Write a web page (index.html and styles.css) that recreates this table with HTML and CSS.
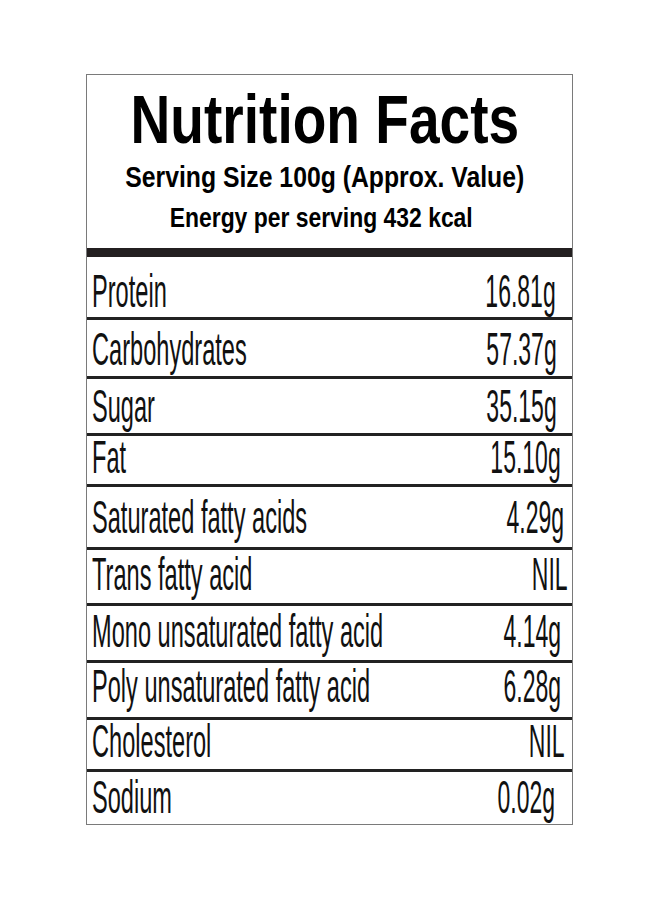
FILE: index.html
```html
<!DOCTYPE html>
<html lang="en">
<head>
<meta charset="utf-8">
<title>Nutrition Facts</title>
<link rel="stylesheet" href="styles.css">
</head>
<body>
<div class="panel">
  <div class="head">
    <div class="title">Nutrition Facts</div>
    <div class="serving">Serving Size 100g (Approx. Value)</div>
    <div class="energy">Energy per serving 432 kcal</div>
  </div>
  <div class="bar"></div>
  <div class="rows">
    <div class="row"><div class="name"><span>Protein</span></div><div class="val">16.81g</div></div>
    <div class="row"><div class="name"><span>Carbohydrates</span></div><div class="val">57.37g</div></div>
    <div class="row"><div class="name"><span>Sugar</span></div><div class="val">35.15g</div></div>
    <div class="row"><div class="name"><span>Fat</span></div><div class="val">15.10g</div></div>
    <div class="row"><div class="name"><span>Saturated fatty acids</span></div><div class="val">4.29g</div></div>
    <div class="row"><div class="name"><span>Trans fatty acid</span></div><div class="val">NIL</div></div>
    <div class="row"><div class="name"><span>Mono unsaturated fatty acid</span></div><div class="val">4.14g</div></div>
    <div class="row"><div class="name"><span>Poly unsaturated fatty acid</span></div><div class="val">6.28g</div></div>
    <div class="row"><div class="name"><span>Cholesterol</span></div><div class="val">NIL</div></div>
    <div class="row"><div class="name"><span>Sodium</span></div><div class="val">0.02g</div></div>
  </div>
</div>
</body>
</html>
```
FILE: styles.css
```css
html, body {
  margin: 0;
  padding: 0;
  background: #fff;
}
body {
  font-family: "Liberation Sans", Arial, sans-serif;
  color: #111;
}
.panel {
  margin: 74px 0 0 86px;
  width: 487px;
  border: 1px solid #7a7a7a;
  box-sizing: border-box;
}
.head {
  display: flex;
  flex-direction: column;
  align-items: center;
  padding: 10px 10px 0 0;
  font-weight: 700;
  color: #000;
}
.head > div {
  white-space: nowrap;
}
.title {
  font-size: 68px;
  line-height: 68px;
  transform: scaleX(0.81);
}
.serving {
  font-size: 30px;
  line-height: 30px;
  margin-top: 9px;
  transform: scaleX(0.825);
}
.energy {
  font-size: 28px;
  line-height: 28px;
  margin-top: 12px;
  margin-right: 6px;
  transform: scaleX(0.818);
}
.bar {
  height: 9px;
  margin-top: 16px;
  background: #231f20;
}
.row {
  display: flex;
  align-items: flex-end;
  box-sizing: border-box;
  height: var(--h);
  padding: 0 var(--pr) var(--pb) 5px;
  border-bottom: 3px solid #222;
  font-size: 46px;
  line-height: 46px;
}
.row:last-child {
  border-bottom: 0;
}
.name {
  flex: 1 1 0;
  min-width: 0;
  white-space: nowrap;
}
.name span {
  display: inline-block;
  transform: scaleX(0.513);
  transform-origin: 0 100%;
}
.val {
  flex: none;
  white-space: nowrap;
  transform: scaleX(0.5);
  transform-origin: 100% 100%;
}
.row:nth-child(1)  { --h: 63px; --pb: 3px; --pr: 16px; }
.row:nth-child(2)  { --h: 59px; --pb: 4px; --pr: 15px; }
.row:nth-child(3)  { --h: 57px; --pb: 4px; --pr: 15px; }
.row:nth-child(4)  { --h: 51px; --pb: 4px; --pr: 11px; }
.row:nth-child(5)  { --h: 63px; --pb: 7px; --pr: 8px; }
.row:nth-child(6)  { --h: 56px; --pb: 6px; --pr: 4px; }
.row:nth-child(7)  { --h: 57px; --pb: 6px; --pr: 11px; }
.row:nth-child(8)  { --h: 57px; --pb: 8px; --pr: 11px; }
.row:nth-child(9)  { --h: 52px; --pb: 5px; --pr: 7px; }
.row:nth-child(10) { --h: 52px; --pb: 4px; --pr: 17px; }
```
